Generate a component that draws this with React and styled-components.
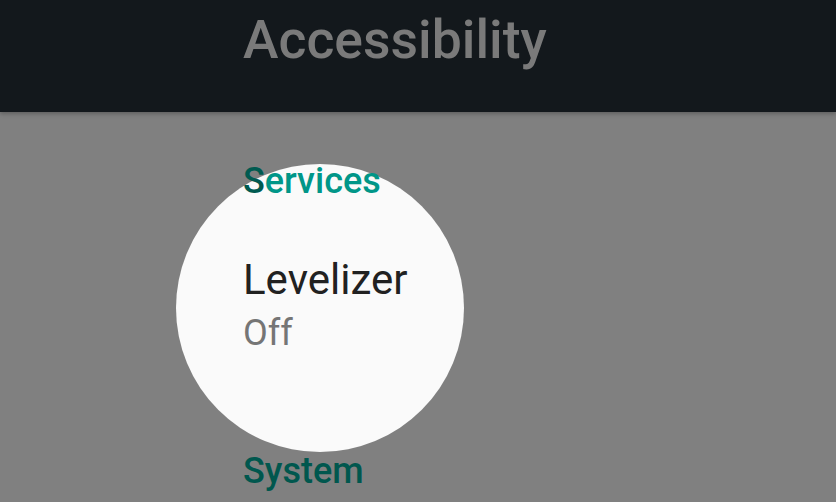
import React from "react";
import styled, { createGlobalStyle } from "styled-components";

const GlobalStyle = createGlobalStyle`
	html, body {
		margin: 0;
		padding: 0;
		background: #fafafa;
		font-family: Roboto, "Noto Sans", sans-serif;
	}
	#root {
		width: 836px;
		height: 502px;
		overflow: hidden;
	}
`;

const sections = [
	{ title: "Services", lifted: true, items: [{ name: "Levelizer", summary: "Off" }] },
	{ title: "System", items: [] },
];

function App() {
	return (
		<Screen>
			<GlobalStyle />
			<AppBar>
				<Title>Accessibility</Title>
			</AppBar>
			<Body>
				<Spotlight />
				<List>
					{sections.map((section) => (
						<Section key={section.title}>
							<SectionTitle $lifted={section.lifted}>
								{section.lifted ? (
									<>
										<DimLetter>S</DimLetter>
										{section.title.slice(1)}
									</>
								) : (
									section.title
								)}
							</SectionTitle>
							{section.items.map((item) => (
								<Item key={item.name}>
									<ItemName>{item.name}</ItemName>
									<ItemSummary>{item.summary}</ItemSummary>
								</Item>
							))}
						</Section>
					))}
				</List>
			</Body>
		</Screen>
	);
}

const Screen = styled.div`
	width: 836px;
	height: 502px;
	display: flex;
	flex-direction: column;
	overflow: hidden;
`;

const AppBar = styled.header`
	height: 112px;
	flex-shrink: 0;
	background-color: #13181c;
	padding: 13px 0 0 243px;
	box-sizing: border-box;
	position: relative;
	z-index: 3;
	box-shadow: 0 2px 4px rgba(0, 0, 0, 0.25);
`;

const Title = styled.h1`
	margin: 0;
	font-size: 53.5px;
	line-height: 53px;
	font-weight: 500;
	color: #7a7a7a;
`;

const Body = styled.main`
	flex: 1;
	position: relative;
	overflow: hidden;
	background-color: #fafafa;
`;

const Spotlight = styled.div`
	position: absolute;
	left: 176px;
	top: 52px;
	width: 288px;
	height: 288px;
	border-radius: 50%;
	box-shadow: 0 0 0 1200px rgba(0, 0, 0, 0.486);
	z-index: 1;
	pointer-events: none;
`;

const List = styled.div`
	padding: 51px 0 0 243px;
	display: flex;
	flex-direction: column;
	gap: 102px;
`;

const Section = styled.section`
	display: flex;
	flex-direction: column;
`;

const SectionTitle = styled.h2`
	margin: 0;
	font-size: 36px;
	line-height: 36px;
	font-weight: 500;
	color: ${(p) => (p.$lifted ? "#009688" : "#00a998")};
	position: relative;
	z-index: ${(p) => (p.$lifted ? 2 : 0)};
`;

const DimLetter = styled.span`
	color: #005a50;
`;

const Item = styled.div`
	display: flex;
	flex-direction: column;
	padding-top: 60px;
	gap: 14px;
`;

const ItemName = styled.div`
	font-size: 42px;
	line-height: 42px;
	color: #212121;
`;

const ItemSummary = styled.div`
	font-size: 36px;
	line-height: 36px;
	color: #757575;
`;

export default App;
